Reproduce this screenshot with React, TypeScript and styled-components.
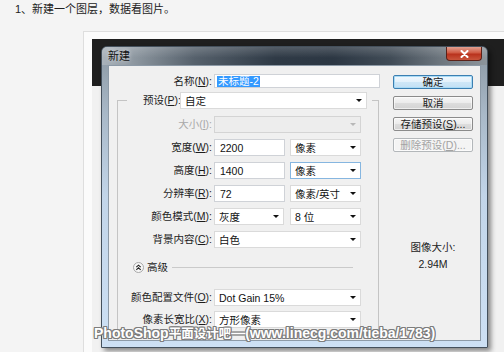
import React from "react";
import styled, { createGlobalStyle } from "styled-components";

const Global = createGlobalStyle`
  html, body { margin: 0; padding: 0; background: #f4f4f4; }
  body {
    width: 504px; height: 352px; overflow: hidden;
    font-family: "Liberation Sans", "Noto Sans CJK SC", sans-serif;
  }
`;

const Page = styled.div`
  position: relative;
  width: 504px;
  height: 352px;
  overflow: hidden;
`;

const Heading = styled.p`
  margin: 0;
  height: 31px;
  box-sizing: border-box;
  padding: 3px 0 0 15px;
  font-family: "Liberation Sans", "Noto Sans CJK SC", sans-serif;
  font-size: 11px;
  line-height: 13px;
  color: #222;
`;

const ImageBox = styled.div`
  margin-left: 83px;
  height: 330px;
  border: 1px solid #dedede;
  border-right: none;
  background: #fbfbfb;
  padding: 7px 0 0 8px;
`;

const Screen = styled.div`
  height: 320px;
  background: linear-gradient(#1f1f1f 0, #1f1f1f 47px, #f1f1f1 47px);
  padding: 7px 0 0 9px;
`;

const Dialog = styled.div`
  width: 387px;
  height: 302px;
  box-sizing: border-box;
  border: 1px solid #44505c;
  border-radius: 6px 6px 0 0;
  box-shadow: 3px 3px 5px rgba(0, 0, 0, 0.45);
  background: linear-gradient(180deg, #8a96a1 0%, #a8b8c7 22%, #c2d5e9 50%, #cde0f4 100%);
  padding: 0 6px 6px;
  display: flex;
  flex-direction: column;
  font-size: 10.5px;
  color: #1c1c1c;
`;

const TitleBar = styled.div`
  height: 19px;
  margin: 0 -6px;
  padding-left: 6px;
  border-radius: 5px 5px 0 0;
  display: flex;
  align-items: flex-start;
  justify-content: space-between;
  background:
    linear-gradient(180deg, rgba(255,255,255,0.18) 0%, rgba(255,255,255,0) 60%),
    linear-gradient(90deg, #aab3bb 0%, #8b959e 9%, #56616c 24%, #2f3a46 45%, #2c3743 60%, #414c57 75%, #6d767e 88%, #8d959c 100%);
`;

const Title = styled.span`
  margin-top: 3px;
  font-size: 11px;
  line-height: 13px;
  color: #111;
  text-shadow: 0 0 4px rgba(255,255,255,0.7);
`;

const CloseBtn = styled.div`
  width: 36px;
  height: 14px;
  margin-right: 5px;
  box-sizing: border-box;
  border: 1px solid #5b2118;
  border-top: none;
  border-radius: 0 0 4px 4px;
  background: linear-gradient(180deg, #e3a090 0%, #cf5a43 45%, #b9321d 55%, #c8553c 100%);
  display: flex;
  align-items: center;
  justify-content: center;
`;

const Client = styled.div`
  flex: 1;
  background: #f0f0f0;
  border: 1px solid #8d9aa7;
  padding-top: 8px;
  display: flex;
  align-items: flex-start;
`;

const LeftCol = styled.div`
  width: 272px;
  flex: none;
  align-self: stretch;
  display: flex;
  flex-direction: column;
`;

const Row = styled.div<{ $mt?: number }>`
  display: flex;
  align-items: center;
  height: 17px;
  margin-top: ${(p) => p.$mt ?? 0}px;
  white-space: nowrap;
`;

const Label = styled.span<{ $w: number; $disabled?: boolean }>`
  flex: none;
  width: ${(p) => p.$w}px;
  margin-right: 2px;
  text-align: right;
  white-space: nowrap;
  line-height: 13px;
  color: ${(p) => (p.$disabled ? "#a9a9a9" : "#1c1c1c")};
  u { text-underline-offset: 1px; }
`;

const TextBox = styled.div<{ $w: number; $h?: number }>`
  flex: none;
  width: ${(p) => p.$w}px;
  height: ${(p) => p.$h ?? 17}px;
  box-sizing: border-box;
  border: 1px solid #cfd2d7;
  background: #fff;
  padding-left: 2px;
  display: flex;
  align-items: center;
  color: #111;
`;

const Highlight = styled.span`
  background: #3399ff;
  color: #fff;
  line-height: 11px;
  padding: 0 1px;
`;

const Select = styled.div<{ $w: number; $disabled?: boolean; $focus?: boolean; $ml?: number }>`
  flex: none;
  width: ${(p) => p.$w}px;
  height: 17px;
  margin-left: ${(p) => p.$ml ?? 0}px;
  box-sizing: border-box;
  border: 1px solid ${(p) => (p.$focus ? "#86b6e0" : p.$disabled ? "#d4d4d4" : "#dadada")};
  background: ${(p) => (p.$disabled ? "#ededed" : "#fff")};
  padding: 0 4px 0 4px;
  display: flex;
  align-items: center;
  justify-content: space-between;
  color: #111;
`;

const Arrow = styled.span<{ $disabled?: boolean }>`
  width: 0;
  height: 0;
  border-left: 3px solid transparent;
  border-right: 3px solid transparent;
  border-top: 3px solid ${(p) => (p.$disabled ? "#b8b8b8" : "#111")};
`;

const Group = styled.fieldset`
  margin: 4px 0 0 8px;
  padding: 0 0 12px 0;
  width: 262px;
  box-sizing: border-box;
  border: 1px solid #c4c4c4;
  border-bottom: none;
  flex: 1;
  min-width: 0;
`;

const Legend = styled.legend`
  margin-left: 9px;
  padding: 0 5px 0 16px;
  display: flex;
  align-items: center;
  height: 17px;
`;

const GroupBody = styled.div`
  padding-top: 7px;
  display: flex;
  flex-direction: column;
`;

const AdvRow = styled.div`
  display: flex;
  align-items: center;
  height: 12px;
  margin: 13px 25px 0 15px;
`;

const AdvText = styled.span`
  margin-left: 3px;
  line-height: 12px;
`;

const AdvLine = styled.span`
  flex: 1;
  height: 1px;
  margin-left: 4px;
  background: #cacaca;
`;

const RightCol = styled.div`
  margin-left: 12px;
  padding-top: 1px;
  width: 80px;
  display: flex;
  flex-direction: column;
  gap: 7px;
`;

const Button = styled.div<{ $kind?: "default" | "disabled" }>`
  height: 14px;
  box-sizing: border-box;
  border: 1px solid ${(p) => (p.$kind === "default" ? "#3c7fb1" : p.$kind === "disabled" ? "#b3b7ba" : "#8b8b8b")};
  border-radius: 2px;
  background: ${(p) =>
    p.$kind === "default"
      ? "linear-gradient(180deg, #f1f8fd 0%, #e3f1fb 50%, #cfe7f7 52%, #c3e0f4 100%)"
      : p.$kind === "disabled"
      ? "#f4f4f4"
      : "linear-gradient(180deg, #f6f6f6 0%, #ebebeb 50%, #dddddd 52%, #d3d3d3 100%)"};
  box-shadow: ${(p) => (p.$kind === "default" ? "inset 0 0 0 1px #a9dbf6" : "inset 0 0 0 1px rgba(255,255,255,0.6)")};
  color: ${(p) => (p.$kind === "disabled" ? "#a3a3a3" : "#1c1c1c")};
  display: flex;
  align-items: center;
  justify-content: center;
  line-height: 12px;
  u { text-underline-offset: 1px; }
`;

const SizeInfo = styled.div`
  margin-top: 80px;
  text-align: center;
  line-height: 17px;
  color: #222;
`;

const Watermark = styled.div`
  position: absolute;
  left: 94px;
  top: 325px;
  font-family: "Liberation Sans", "Noto Sans CJK SC", sans-serif;
  font-weight: bold;
  font-size: 14px;
  line-height: 16px;
  color: #fff;
  white-space: nowrap;
  text-shadow:
    1px 0 0 #7d7d7d, -1px 0 0 #7d7d7d, 0 1px 0 #7d7d7d, 0 -1px 0 #7d7d7d,
    1px 1px 0 #7d7d7d, -1px -1px 0 #7d7d7d, 1px -1px 0 #7d7d7d, -1px 1px 0 #7d7d7d;
  span { font-size: 12.5px; }
`;

const AdvIcon = () => (
  <svg width="11" height="11" viewBox="0 0 11 11">
    <circle cx="5.5" cy="5.5" r="5" fill="#f7f7f7" stroke="#a8a8a8" />
    <path d="M3.3 5.2 L5.5 3.2 L7.7 5.2 M3.3 7.8 L5.5 5.8 L7.7 7.8" fill="none" stroke="#222" strokeWidth="1.1" />
  </svg>
);

const CloseIcon = () => (
  <svg width="9" height="8" viewBox="0 0 9 8">
    <path d="M1.5 1 L7.5 7 M7.5 1 L1.5 7" stroke="#fff" strokeWidth="2" strokeLinecap="round" />
  </svg>
);

type GRow =
  | { label: React.ReactNode; kind: "pair"; value: string; unit: string; focus?: boolean; firstSelect?: boolean }
  | { label: React.ReactNode; kind: "full"; value: string; disabled?: boolean };

const topRows: GRow[] = [
  { label: <>大小(<u>I</u>):</>, kind: "full", value: "", disabled: true },
  { label: <>宽度(<u>W</u>):</>, kind: "pair", value: "2200", unit: "像素" },
  { label: <>高度(<u>H</u>):</>, kind: "pair", value: "1400", unit: "像素", focus: true },
  { label: <>分辨率(<u>R</u>):</>, kind: "pair", value: "72", unit: "像素/英寸" },
  { label: <>颜色模式(<u>M</u>):</>, kind: "pair", value: "灰度", unit: "8 位", firstSelect: true },
  { label: <>背景内容(<u>C</u>):</>, kind: "full", value: "白色" },
];

const bottomRows: GRow[] = [
  { label: <>颜色配置文件(<u>O</u>):</>, kind: "full", value: "Dot Gain 15%" },
  { label: <>像素长宽比(<u>X</u>):</>, kind: "full", value: "方形像素" },
];

const FieldRow = ({ row, mt }: { row: GRow; mt: number }) => (
  <Row $mt={mt}>
    <Label $w={94} $disabled={row.kind === "full" && row.disabled}>{row.label}</Label>
    {row.kind === "full" ? (
      <Select $w={147} $disabled={row.disabled}>
        <span>{row.value}</span>
        <Arrow $disabled={row.disabled} />
      </Select>
    ) : (
      <>
        {row.firstSelect ? (
          <Select $w={70}>
            <span>{row.value}</span>
            <Arrow />
          </Select>
        ) : (
          <TextBox $w={71}>&nbsp;{row.value}</TextBox>
        )}
        <Select $w={71} $ml={row.firstSelect ? 6 : 5} $focus={row.focus}>
          <span>{row.unit}</span>
          <Arrow />
        </Select>
      </>
    )}
  </Row>
);

export default function App() {
  return (
    <Page>
      <Global />
      <Heading>1、新建一个图层，数据看图片。</Heading>
      <ImageBox>
        <Screen>
          <Dialog>
            <TitleBar>
              <Title>新建</Title>
              <CloseBtn>
                <CloseIcon />
              </CloseBtn>
            </TitleBar>
            <Client>
              <LeftCol>
                <Row style={{ height: 14 }}>
                  <Label $w={103}>名称(<u>N</u>):</Label>
                  <TextBox $w={166} $h={14}>
                    <Highlight>未标题-2</Highlight>
                  </TextBox>
                </Row>
                <Group>
                  <Legend>
                    <Label $w={35} style={{ textAlign: "left" }}>预设(<u>P</u>):</Label>
                    <Select $w={187}>
                      <span>自定</span>
                      <Arrow />
                    </Select>
                  </Legend>
                  <GroupBody>
                    {topRows.map((r, i) => (
                      <FieldRow key={i} row={r} mt={i === 0 ? 0 : 6} />
                    ))}
                    <AdvRow>
                      <AdvIcon />
                      <AdvText>高级</AdvText>
                      <AdvLine />
                    </AdvRow>
                    {bottomRows.map((r, i) => (
                      <FieldRow key={i} row={r} mt={i === 0 ? 16 : 5} />
                    ))}
                  </GroupBody>
                </Group>
              </LeftCol>
              <RightCol>
                <Button $kind="default">确定</Button>
                <Button>取消</Button>
                <Button>存储预设(<u>S</u>)...</Button>
                <Button $kind="disabled">删除预设(<u>D</u>)...</Button>
                <SizeInfo>
                  图像大小:
                  <br />
                  2.94M
                </SizeInfo>
              </RightCol>
            </Client>
          </Dialog>
        </Screen>
      </ImageBox>
      <Watermark>
        PhotoShop<span>平面设计吧</span>—(www.linecg.com/tieba/1783)
      </Watermark>
    </Page>
  );
}
